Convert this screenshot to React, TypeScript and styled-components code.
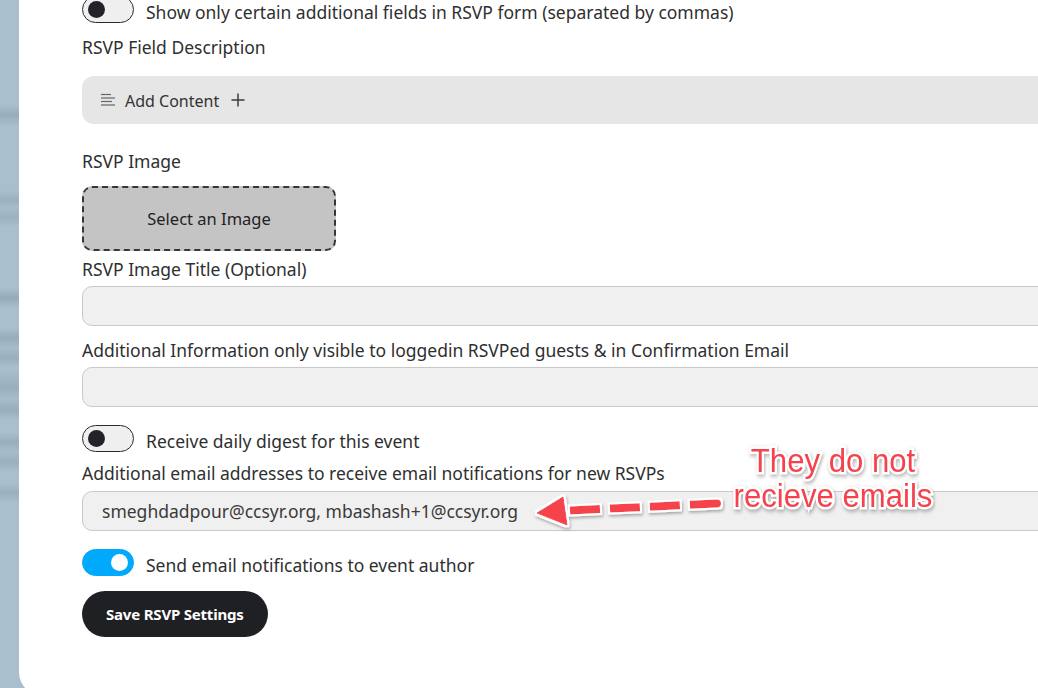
import React from 'react';
import styled, { createGlobalStyle } from 'styled-components';

const GlobalStyle = createGlobalStyle`
  html, body {
    margin: 0;
    padding: 0;
    height: 100%;
    overflow: hidden;
  }
  body {
    font-family: 'Noto Sans', 'Open Sans', Arial, sans-serif;
    color: #2f2f2f;
  }
`;

const Page = styled.div`
  height: 688px;
  overflow: hidden;
  padding-left: 19px;
  background: linear-gradient(
    to bottom,
    #a9bfce 0px,
    #a9bfce 104px,
    #97adbd 115px,
    #a9bfce 126px,
    #a9bfce 190px,
    #9aafbf 200px,
    #a7bdcc 208px,
    #9bb0c0 217px,
    #a9bfce 227px,
    #a9bfce 288px,
    #95abbb 298px,
    #a9bfce 308px,
    #a9bfce 328px,
    #97adbd 338px,
    #a6bccb 348px,
    #99aebe 358px,
    #a9bfce 368px,
    #99aebe 388px,
    #a7bdcc 399px,
    #97adbd 410px,
    #a9bfce 420px,
    #a9bfce 432px,
    #98aebe 442px,
    #a6bccb 452px,
    #9aafbf 462px,
    #a9bfce 472px,
    #a9bfce 483px,
    #9aafbf 493px,
    #a9bfce 503px,
    #a9bfce 100%
  );
`;

const Card = styled.div`
  position: relative;
  margin-top: -30px;
  margin-right: -300px;
  background: #ffffff;
  border-radius: 24px;
  padding: 26px 0 59px 63px;
`;

const Form = styled.div`
  display: flex;
  flex-direction: column;
  width: 1100px;
`;

const Block = styled.div<{ $top?: number }>`
  margin-top: ${(p) => p.$top ?? 0}px;
`;

const ToggleRow = styled(Block)`
  display: flex;
  align-items: center;
  gap: 12px;
  height: 27px;
  font-size: 17.5px;
  line-height: 24px;
`;

const ToggleRowText = styled.span`
  position: relative;
  top: 2px;
`;

const Switch = styled.span<{ $on?: boolean }>`
  position: relative;
  flex: none;
  box-sizing: border-box;
  width: 52px;
  height: 27px;
  border-radius: 14px;
  border: 1px solid ${(p) => (p.$on ? '#00a9fc' : '#2a2a2a')};
  background: ${(p) => (p.$on ? '#00a9fc' : '#efefef')};

  &::after {
    content: '';
    position: absolute;
    top: 4px;
    left: ${(p) => (p.$on ? '28px' : '5px')};
    width: 17px;
    height: 17px;
    border-radius: 50%;
    background: ${(p) => (p.$on ? '#ffffff' : '#222326')};
  }
`;

const Label = styled(Block)`
  font-size: 17.5px;
  line-height: 24px;
  height: 24px;
  white-space: nowrap;
`;

const AddContentBar = styled(Block)`
  display: flex;
  align-items: center;
  height: 48px;
  background: #e6e6e6;
  border-radius: 12px;
  padding-left: 18px;
  font-size: 16px;
  color: #333;
`;

const AddContentText = styled.span`
  margin-left: 9px;
  margin-right: 12px;
  position: relative;
  top: 1px;
`;

const ImagePicker = styled(Block)`
  box-sizing: border-box;
  width: 254px;
  height: 65px;
  display: flex;
  align-items: center;
  justify-content: center;
  background: #c4c4c4;
  border: 2px dashed #363636;
  border-radius: 10px;
  font-size: 16.5px;
  color: #222;
`;

const TextInput = styled(Block)`
  box-sizing: border-box;
  height: 40px;
  display: flex;
  align-items: center;
  padding-left: 19px;
  background: #f0f0f0;
  border: 1px solid #c9c9c9;
  border-radius: 10px;
  font-size: 17.5px;
  color: #3a3a3a;
`;

const SaveButton = styled(Block)`
  align-self: flex-start;
  height: 46px;
  padding: 0 24px;
  display: flex;
  align-items: center;
  border-radius: 23px;
  background: #1f2024;
  color: #ffffff;
  font-size: 15px;
  font-weight: 700;
  letter-spacing: -0.2px;
`;

const Callout = styled.div`
  position: absolute;
  left: 694px;
  top: 473px;
  width: 240px;
  text-align: center;
  font-family: 'Liberation Sans', Arial, sans-serif;
  font-size: 34px;
  line-height: 35px;
  color: #f6424c;
  -webkit-text-stroke: 5px #ffffff;
  paint-order: stroke fill;
  transform: scaleX(0.915);
  filter: drop-shadow(1px 2px 2px rgba(0, 0, 0, 0.3));
`;

const ArrowSvg = styled.svg`
  position: absolute;
  left: 511px;
  top: 520px;
  overflow: visible;
`;

const LinesIcon = () => (
  <svg width="16" height="14" viewBox="0 0 16 14">
    <g stroke="#666" strokeWidth="1.2">
      <line x1="1" y1="1.5" x2="11" y2="1.5" />
      <line x1="1" y1="5" x2="15" y2="5" />
      <line x1="1" y1="8.5" x2="12" y2="8.5" />
      <line x1="1" y1="12" x2="15" y2="12" />
    </g>
  </svg>
);

const PlusIcon = () => (
  <svg width="14" height="14" viewBox="0 0 14 14">
    <g stroke="#444" strokeWidth="1.6">
      <line x1="7" y1="0.5" x2="7" y2="13.5" />
      <line x1="0.5" y1="7" x2="13.5" y2="7" />
    </g>
  </svg>
);

const Arrow = () => (
  <ArrowSvg width="200" height="45" viewBox="0 0 200 45">
    <defs>
      <filter id="outline" x="-20%" y="-50%" width="140%" height="200%">
        <feMorphology in="SourceAlpha" operator="dilate" radius="2" result="fat" />
        <feFlood floodColor="#ffffff" />
        <feComposite in2="fat" operator="in" result="white" />
        <feGaussianBlur in="fat" stdDeviation="1.5" result="blur" />
        <feOffset in="blur" dx="1" dy="2" result="shadowOff" />
        <feFlood floodColor="rgba(0,0,0,0.3)" />
        <feComposite in2="shadowOff" operator="in" result="shadow" />
        <feMerge>
          <feMergeNode in="shadow" />
          <feMergeNode in="white" />
          <feMergeNode in="SourceGraphic" />
        </feMerge>
      </filter>
    </defs>
    <g filter="url(#outline)" fill="#f6424c" stroke="#f6424c">
      <polygon points="7,23 33,7 37,35" strokeWidth="1" strokeLinejoin="round" />
      <line x1="40" y1="20.5" x2="186" y2="13.5" strokeWidth="8" strokeDasharray="30 10" />
      <circle cx="187" cy="13.5" r="4" stroke="none" />
    </g>
  </ArrowSvg>
);

export default function App() {
  return (
    <>
      <GlobalStyle />
      <Page>
        <Card>
          <Form>
            <ToggleRow>
              <Switch />
              <ToggleRowText>Show only certain additional fields in RSVP form (separated by commas)</ToggleRowText>
            </ToggleRow>
            <Label $top={12}>RSVP Field Description</Label>
            <AddContentBar $top={17}>
              <LinesIcon />
              <AddContentText>Add Content</AddContentText>
              <PlusIcon />
            </AddContentBar>
            <Label $top={25}>RSVP Image</Label>
            <ImagePicker $top={13}>Select an Image</ImagePicker>
            <Label $top={6}>RSVP Image Title (Optional)</Label>
            <TextInput $top={5} />
            <Label $top={12}>Additional Information only visible to loggedin RSVPed guests &amp; in Confirmation Email</Label>
            <TextInput $top={5} />
            <ToggleRow $top={18}>
              <Switch />
              <ToggleRowText>Receive daily digest for this event</ToggleRowText>
            </ToggleRow>
            <Label $top={9}>Additional email addresses to receive email notifications for new RSVPs</Label>
            <TextInput $top={6}>smeghdadpour@ccsyr.org, mbashash+1@ccsyr.org</TextInput>
            <ToggleRow $top={18}>
              <Switch $on />
              <ToggleRowText>Send email notifications to event author</ToggleRowText>
            </ToggleRow>
            <SaveButton $top={15}>Save RSVP Settings</SaveButton>
          </Form>
          <Callout>
            They do not
            <br />
            recieve emails
          </Callout>
          <Arrow />
        </Card>
      </Page>
    </>
  );
}
